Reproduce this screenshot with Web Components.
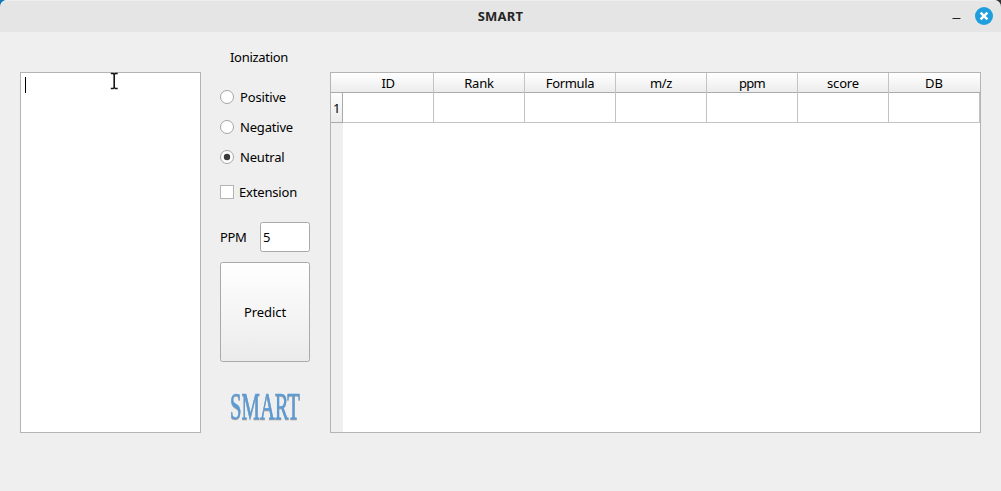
<!DOCTYPE html>
<html lang="en">
<head>
<meta charset="utf-8">
<title>SMART</title>
<style>
html,body{margin:0;height:100%;overflow:hidden;background:linear-gradient(90deg,#1277ba 50%,#333 50%)}
body{font:13px/20px "Noto Sans","Open Sans",sans-serif;color:#000}
</style>
</head>
<body>
<smart-app></smart-app>
<script>
const define = (name, html, setup) => customElements.define(name, class extends HTMLElement {
  connectedCallback() {
    if (this.shadowRoot) return;
    const t = document.createElement('template');
    t.innerHTML = html;
    this.attachShadow({mode: 'open'}).append(t.content.cloneNode(true));
    if (setup) setup(this, this.shadowRoot);
  }
});

// A one-line label whose letter spacing is fitted to the given width.
define('ui-label', `<style>:host{display:inline-block;white-space:pre;line-height:20px}span{display:inline-block}</style><span><slot></slot></span>`,
  (el, root) => {
    const span = root.querySelector('span');
    const w = +el.getAttribute('w'), n = el.textContent.length;
    const s = (w - span.getBoundingClientRect().width) / n;
    span.style.letterSpacing = s.toFixed(3) + 'px';
  });

define('title-bar', `<style>
:host{display:grid;grid-template-columns:1fr auto 1fr;align-items:center;height:32px;background:#e5e5e5;border-radius:7px 7px 0 0;box-shadow:inset 0 1px #eee;font-weight:700;color:#262626}
.buttons{display:flex;justify-content:flex-end;align-items:center;gap:14px;padding-right:8px}
svg{display:block}
</style><i></i><slot></slot><div class="buttons">
<svg width="9" height="18"><path d="M.5 11.5h8" stroke="#222"/></svg>
<svg width="18" height="18"><circle cx="9" cy="9" r="9" fill="#1f9ede"/><path d="M5.6 5.6l6.8 6.8M12.4 5.6l-6.8 6.8" stroke="#fff" stroke-width="2.5"/></svg></div>`);

define('text-area', `<style>
:host{display:block;box-sizing:border-box;background:#fff;border:1px solid #b4b4b4;position:relative}
.caret{width:1px;height:16px;margin:4px 0 0 4px;background:#000}
svg{position:absolute;left:88px;top:-1px}
</style><div class="caret"></div>
<svg width="11" height="18" viewBox="0 0 11 18"><path d="M1.8 1.5h2.3L5.2 2.5l1.2-1h2.3M5.2 2v14M1.8 16.5h2.3l1.1-1 1.2 1h2.3" fill="none" stroke="#151515" stroke-width="1.6"/></svg>`);

define('radio-option', `<style>
:host{display:flex;align-items:center;height:30px;gap:6px}
svg{flex:none}circle.dot{display:none}:host([checked]) .dot{display:block}
</style><svg width="14" height="14"><circle cx="7" cy="7" r="6.5" fill="#fff" stroke="#a5a5a5"/><circle class="dot" cx="7" cy="7" r="3.2" fill="#3c3c3c"/></svg><slot></slot>`);

define('check-option', `<style>
:host{display:flex;align-items:center;height:30px;gap:5px}
i{box-sizing:border-box;width:14px;height:14px;background:#fff;border:1px solid #b4b4b4}
</style><i></i><slot></slot>`);

define('number-field', `<style>
:host{display:flex;justify-content:space-between;align-items:center;height:30px}
.box{box-sizing:border-box;width:50px;height:30px;padding:4px 2px;background:#fff;border:1px solid #a9a9a9;border-radius:2.5px}
</style><slot></slot><div class="box"><slot name="value"></slot></div>`);

define('push-button', `<style>
:host{display:flex;box-sizing:border-box;height:100px;align-items:center;justify-content:center;border:1px solid #a9a9a9;border-radius:2.5px;background:linear-gradient(#fff,#ebebeb)}
</style><slot></slot>`);

define('smart-logo', `<style>:host{display:block;height:30px}svg{display:block;margin:0 auto;overflow:visible;filter:drop-shadow(0 1px .6px #0005)}
text{font:38px "Liberation Serif",serif;fill:#5b9bd5;stroke:#5b9bd5;stroke-width:.4px}</style>
<svg width="70" height="30"><text x="0" y="27" textLength="70" lengthAdjust="spacingAndGlyphs">SMART</text></svg>`);

define('result-table', `<style>
:host{display:grid;box-sizing:border-box;grid-template:20px 30px 1fr / 12px 1fr;border:1px solid #b4b4b4;background:#fff}
.head{grid-column:1/3;display:grid;grid-template-columns:103px repeat(6,91px);background:linear-gradient(#fff,#ececec);border-bottom:1px solid #aaa}
.head>div{border-right:1px solid #c3c3c3;text-align:center}
.head>div:first-child{padding-left:12px}
.head>div:last-child{border-color:transparent}
.num{box-sizing:border-box;border:solid #aaa;border-width:0 1px 1px 0;background:linear-gradient(#fdfdfd,#ececec);display:flex;align-items:center;justify-content:center}
.row{display:grid;grid-template-columns:repeat(7,91px)}
.row i{border:solid #c3c3c3;border-width:0 1px 1px 0}
.side{background:#efefef}
</style><div class="head"></div><div class="num"><ui-label w="7">1</ui-label></div><div class="row">${'<i></i>'.repeat(7)}</div><div class="side"></div>`,
  (el, root) => {
    root.querySelector('.head').innerHTML = [['ID',13],['Rank',29.5],['Formula',48.5],['m/z',22],['ppm',26],['score',32],['DB',18]]
      .map(([t, w]) => `<div><ui-label w="${w}">${t}</ui-label></div>`).join('');
  });

define('smart-app', `<style>
:host{display:flex;flex-direction:column;height:491px}
main{flex:1;box-sizing:border-box;background:#efefef;padding:15px 20px 58px;display:grid;grid-template-columns:181px 90px 651px;column-gap:19px}
text-area,result-table{margin-top:25px;height:361px}
result-table{margin-left:1px;width:651px}
.controls{display:flex;flex-direction:column}
.heading{padding-left:10px;margin-bottom:15px;height:20px}
check-option{margin:5px 0 15px}push-button{margin:10px 0 30px}
</style>
<title-bar><ui-label w="45.5">SMART</ui-label></title-bar>
<main><text-area></text-area>
<div class="controls"><div class="heading"><ui-label w="58">Ionization</ui-label></div>
<radio-option><ui-label w="46">Positive</ui-label></radio-option>
<radio-option><ui-label w="53">Negative</ui-label></radio-option>
<radio-option checked><ui-label w="44.5">Neutral</ui-label></radio-option>
<check-option><ui-label w="58">Extension</ui-label></check-option>
<number-field><ui-label w="26.5">PPM</ui-label><ui-label slot="value" w="7">5</ui-label></number-field>
<push-button><ui-label w="42">Predict</ui-label></push-button>
<smart-logo></smart-logo></div>
<result-table></result-table></main>`);
</script>
</body>
</html>
